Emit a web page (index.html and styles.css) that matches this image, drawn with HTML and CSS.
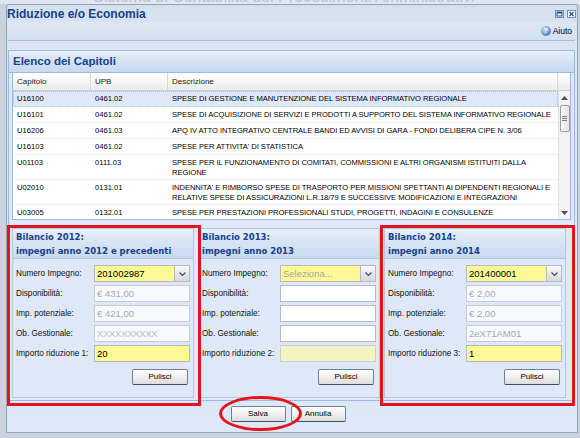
FILE: index.html
```html
<!DOCTYPE html>
<html lang="it">
<head>
<meta charset="utf-8">
<title>Riduzione e/o Economia</title>
<link rel="stylesheet" href="styles.css">
</head>
<body>
<div class="backdrop"><span>Sistema di Contabilità dei Procedimenti Amministrativi</span></div>
<div class="win">
  <div class="win-head">
    <span class="win-title">Riduzione e/o Economia</span>
    <span class="tools">
      <svg class="tool" width="9" height="8" viewBox="0 0 9 8"><rect x="0.5" y="0.5" width="8" height="7" fill="#fff" stroke="#6f8fbd"/><rect x="2" y="2" width="5" height="4" fill="none" stroke="#1f4a8a"/><rect x="2" y="2" width="5" height="1.5" fill="#1f4a8a"/></svg>
      <svg class="tool" width="9" height="8" viewBox="0 0 9 8"><rect x="0.5" y="0.5" width="8" height="7" fill="#fff" stroke="#6f8fbd"/><path d="M2.5 2 L6.5 6 M6.5 2 L2.5 6" stroke="#1f4a8a" stroke-width="1.2"/></svg>
    </span>
  </div>
  <div class="win-body">
    <div class="tbar">
      <span class="qicon">?</span><span class="aiuto">Aiuto</span>
    </div>
    <div class="panel">
      <div class="panel-head">Elenco dei Capitoli</div>
      <div class="panel-body">
        <div class="grid">
          <div class="grid-head">
            <div class="hc c1">Capitolo</div>
            <div class="hc c2">UPB</div>
            <div class="hc c3">Descrizione</div>
            <div class="hc c4"></div>
          </div>
          <div class="grid-body">
            <div class="rows">
              <div class="row sel"><div class="c1">U16100</div><div class="c2">0461.02</div><div class="c3">SPESE DI GESTIONE E MANUTENZIONE DEL SISTEMA INFORMATIVO REGIONALE</div></div>
              <div class="row"><div class="c1">U16101</div><div class="c2">0461.02</div><div class="c3">SPESE DI ACQUISIZIONE DI SERVIZI E PRODOTTI A SUPPORTO DEL SISTEMA INFORMATIVO REGIONALE</div></div>
              <div class="row"><div class="c1">U16206</div><div class="c2">0461.03</div><div class="c3">APQ IV ATTO INTEGRATIVO CENTRALE BANDI ED AVVISI DI GARA - FONDI DELIBERA CIPE N. 3/06</div></div>
              <div class="row"><div class="c1">U16103</div><div class="c2">0461.02</div><div class="c3">SPESE PER ATTIVITA' DI STATISTICA</div></div>
              <div class="row two"><div class="c1">U01103</div><div class="c2">0111.03</div><div class="c3">SPESE PER IL FUNZIONAMENTO DI COMITATI, COMMISSIONI E ALTRI ORGANISMI ISTITUITI DALLA<br>REGIONE</div></div>
              <div class="row two"><div class="c1">U02010</div><div class="c2">0131.01</div><div class="c3">INDENNITA' E RIMBORSO SPESE DI TRASPORTO PER MISSIONI SPETTANTI AI DIPENDENTI REGIONALI E<br>RELATIVE SPESE DI ASSICURAZIONI L.R.18/79 E SUCCESSIVE MODIFICAZIONI E INTEGRAZIONI</div></div>
              <div class="row"><div class="c1">U03005</div><div class="c2">0132.01</div><div class="c3">SPESE PER PRESTAZIONI PROFESSIONALI STUDI, PROGETTI, INDAGINI E CONSULENZE</div></div>
            </div>
            <div class="vscroll">
              <svg class="arr up" width="7" height="4" viewBox="0 0 7 4"><path d="M0 4 L3.5 0 L7 4 Z" fill="#4d4d4d"/></svg>
              <div class="thumb"><i></i><i></i><i></i></div>
              <svg class="arr down" width="7" height="4" viewBox="0 0 7 4"><path d="M0 0 L3.5 4 L7 0 Z" fill="#4d4d4d"/></svg>
            </div>
          </div>
        </div>

        <div class="sets">
          <div class="fset">
            <div class="fhead">Bilancio 2012:<br>impegni anno 2012 e precedenti</div>
            <div class="fbody">
              <div class="frow"><label>Numero Impegno:</label><div class="combo req"><span class="val">201002987</span><span class="trig"><svg width="7" height="4" viewBox="0 0 7 4"><path d="M0.5 0.5 L3.5 3.5 L6.5 0.5" fill="none" stroke="#41577a" stroke-width="1.3"/></svg></span></div></div>
              <div class="frow"><label>Disponibilità:</label><div class="inp dis">€ 431,00</div></div>
              <div class="frow"><label>Imp. potenziale:</label><div class="inp dis">€ 421,00</div></div>
              <div class="frow"><label>Ob. Gestionale:</label><div class="inp dis light">XXXXXXXXXX</div></div>
              <div class="frow"><label>Importo riduzione 1:</label><div class="inp req">20</div></div>
              <div class="fbtns"><span class="btn">Pulisci</span></div>
            </div>
          </div>
          <div class="fset">
            <div class="fhead">Bilancio 2013:<br>impegni anno 2013</div>
            <div class="fbody">
              <div class="frow"><label>Numero Impegno:</label><div class="combo req"><span class="val ph">Seleziona...</span><span class="trig"><svg width="7" height="4" viewBox="0 0 7 4"><path d="M0.5 0.5 L3.5 3.5 L6.5 0.5" fill="none" stroke="#41577a" stroke-width="1.3"/></svg></span></div></div>
              <div class="frow"><label>Disponibilità:</label><div class="inp"></div></div>
              <div class="frow"><label>Imp. potenziale:</label><div class="inp"></div></div>
              <div class="frow"><label>Ob. Gestionale:</label><div class="inp"></div></div>
              <div class="frow"><label>Importo riduzione 2:</label><div class="inp reqdis"></div></div>
              <div class="fbtns"><span class="btn">Pulisci</span></div>
            </div>
          </div>
          <div class="fset">
            <div class="fhead">Bilancio 2014:<br>impegni anno 2014</div>
            <div class="fbody">
              <div class="frow"><label>Numero Impegno:</label><div class="combo req"><span class="val">201400001</span><span class="trig"><svg width="7" height="4" viewBox="0 0 7 4"><path d="M0.5 0.5 L3.5 3.5 L6.5 0.5" fill="none" stroke="#41577a" stroke-width="1.3"/></svg></span></div></div>
              <div class="frow"><label>Disponibilità:</label><div class="inp dis">€ 2,00</div></div>
              <div class="frow"><label>Imp. potenziale:</label><div class="inp dis">€ 2,00</div></div>
              <div class="frow"><label>Ob. Gestionale:</label><div class="inp dis">2eX71AM01</div></div>
              <div class="frow"><label>Importo riduzione 3:</label><div class="inp req">1</div></div>
              <div class="fbtns"><span class="btn">Pulisci</span></div>
            </div>
          </div>
        </div>
      </div>
    </div>
    <div class="btnbar">
      <span class="btn big">Salva</span>
      <span class="btn big">Annulla</span>
    </div>
  </div>
</div>
<div class="mark box1"></div>
<div class="mark box2"></div>
<div class="mark oval"></div>
</body>
</html>
```
FILE: styles.css
```css
* { box-sizing: border-box; }
html, body { margin: 0; padding: 0; }
body {
  width: 580px;
  height: 438px;
  overflow: hidden;
  position: relative;
  background: #c9d2dd;
  font-family: "Liberation Sans", Arial, sans-serif;
  color: #000;
}
.backdrop {
  height: 4px;
  overflow: hidden;
  background: #e2e7ed;
}
.backdrop span {
  display: block;
  margin: -11px 0 0 93px;
  font-size: 16px;
  line-height: 16px;
  color: #bcc4cf;
  white-space: nowrap;
}
.win {
  margin-left: 6px;
  width: 572px;
  height: 429px;
  border: 1px solid #8fa5c2;
  border-radius: 3px 3px 0 0;
  background: linear-gradient(#d5e0ee, #dbe5f2 40px, #dfe8f6);
  display: flex;
  flex-direction: column;
}
.win-head {
  height: 17px;
  display: flex;
  align-items: center;
  justify-content: space-between;
  padding-right: 1px;
}
.win-title {
  font-weight: bold;
  font-size: 12px;
  color: #15428b;
  white-space: nowrap;
}
.tools { display: flex; gap: 3px; align-items: center; padding-top: 1px; }
.tool { display: block; }
.win-body {
  flex: 1;
  display: flex;
  flex-direction: column;
  padding: 0 1px 0 1px;
}
.tbar {
  height: 19px;
  border-bottom: 1px solid #a9bfd8;
  background: linear-gradient(#dde7f4, #d3e0f1);
  display: flex;
  justify-content: flex-end;
  align-items: center;
  padding-right: 3px;
  margin-right: 1px;
}
.qicon {
  width: 10px;
  height: 10px;
  border-radius: 50%;
  background: radial-gradient(circle at 35% 30%, #c9dcf3, #6f97cf 55%, #3d69ab);
  color: #fff;
  font-size: 8px;
  font-weight: bold;
  line-height: 10px;
  text-align: center;
  margin-right: 2px;
}
.aiuto { font-size: 8.5px; color: #000; }
.panel {
  margin: 9px 1px 0 0;
  border: 1px solid #99bbe8;
  background: #dfe8f6;
}
.panel-head {
  height: 22px;
  border-bottom: 1px solid #99bbe8;
  background: linear-gradient(#e9f0fa, #d6e3f4 45%, #c7d9f0);
  padding-left: 4px;
  font-weight: bold;
  font-size: 11.5px;
  line-height: 21px;
  color: #15428b;
}
.panel-body { padding: 0 3px 2px 3px; }
.grid {
  border: 1px solid #99bbe8;
  border-top: none;
  background: #fff;
  font-size: 7.6px;
}
.grid-head {
  display: flex;
  height: 18px;
  background: linear-gradient(#ffffff, #f4f4f4 60%, #ebebeb);
  border-bottom: 1px solid #d0d0d0;
  font-size: 8px;
}
.hc {
  line-height: 17px;
  padding-left: 4px;
  border-right: 1px solid #d6d6d6;
  color: #222;
}
.c1 { width: 78px; flex: none; }
.c2 { width: 77px; flex: none; }
.c3 { width: 390px; flex: none; }
.c4 { width: 12px; flex: none; border-right: none; }
.grid-body {
  display: flex;
  height: 128px;
  overflow: hidden;
}
.rows { width: 545px; flex: none; }
.row {
  display: flex;
  border-bottom: 1px solid #ededed;
  height: 16px;
}
.row > div {
  padding: 3px 0 0 4px;
  line-height: 10px;
  white-space: nowrap;
  overflow: hidden;
}
.row .c3 { letter-spacing: -0.06px; }
.row.two { height: 25px; }
.row.two > div { line-height: 9.5px; }
.row.sel {
  background: #dfe8f6;
  outline: 1px dotted #a3bae9;
  outline-offset: -1px;
}
.vscroll {
  flex: 1;
  background: #f3f3f3;
  border-left: 1px solid #e2e2e2;
  position: relative;
  display: flex;
  flex-direction: column;
  align-items: center;
}
.arr { display: block; }
.arr.up { margin-top: 5px; }
.arr.down { margin-top: auto; margin-bottom: 4px; }
.thumb {
  margin-top: 5px;
  width: 10px;
  height: 27px;
  border: 1px solid #9c9c9c;
  border-radius: 2px;
  background: linear-gradient(90deg, #f7f7f7, #e3e3e3);
  display: flex;
  flex-direction: column;
  align-items: center;
  justify-content: center;
  gap: 1px;
}
.thumb i {
  display: block;
  width: 5px;
  height: 1px;
  background: #7c7c7c;
}
.sets {
  display: flex;
  gap: 4px;
  padding-top: 8px;
}
.fset {
  width: 182px;
  height: 170px;
  border: 1px solid #b3c7e4;
  background: #dfe8f6;
}
.fhead {
  height: 30px;
  padding: 1px 0 0 3px;
  border-bottom: 1px solid #b3c7e4;
  background: linear-gradient(#e8eff9, #d6e3f4 50%, #c9daf0);
  font-family: "DejaVu Sans", Verdana, sans-serif;
  font-weight: bold;
  font-size: 8.5px;
  line-height: 14px;
  color: #15428b;
  white-space: nowrap;
}
.fbody { padding: 6px 0 0 3px; }
.frow {
  display: flex;
  align-items: center;
  height: 17px;
  margin-bottom: 3px;
}
.frow label {
  width: 78px;
  flex: none;
  font-size: 8.2px;
  color: #111;
  white-space: nowrap;
}
.inp, .combo {
  width: 96px;
  height: 17px;
  border: 1px solid #b5b8c8;
  background: #fff;
  font-size: 9.5px;
  line-height: 15px;
  padding-left: 2px;
  white-space: nowrap;
  overflow: hidden;
}
.inp.dis { background: #f7f9fc; border-color: #c6cdd8; color: #a4a9b2; }
.inp.dis.light { color: #bcc1c9; letter-spacing: -0.3px; }
.inp.req { background: #fdf994; border-color: #b5b8c8; }
.inp.reqdis { background: #f6f3c2; border-color: #c6cdd8; }
.combo {
  display: flex;
  padding-left: 0;
}
.combo.req { background: #fdf994; }
.combo .val { flex: 1; padding-left: 2px; }
.combo .val.ph { color: #a6a6a6; }
.trig {
  width: 15px;
  flex: none;
  border-left: 1px solid #b5b8c8;
  background: linear-gradient(#fbfbfb, #e6e6e6 55%, #d9d9d9);
  display: flex;
  align-items: center;
  justify-content: center;
}
.trig svg { display: block; }
.fbtns {
  display: flex;
  justify-content: flex-end;
  padding-right: 5px;
  margin-top: 7px;
}
.btn {
  display: block;
  width: 56px;
  height: 16px;
  border: 1px solid #6c7f9f;
  border-bottom-color: #3e5070;
  border-radius: 2px;
  background: linear-gradient(#ffffff, #f1f1f1 45%, #dcdcdc);
  font-size: 8px;
  line-height: 14px;
  text-align: center;
  color: #000;
}
.btnbar {
  flex: 1;
  display: flex;
  justify-content: center;
  gap: 5px;
  padding: 5px 8px 0 0;
}
.btn.big { width: 55px; }
.mark {
  position: absolute;
  border: 3px solid #e4141c;
}
.box1 { left: 7px; top: 225px; width: 194px; height: 181px; }
.box2 { left: 380px; top: 225px; width: 195px; height: 181px; }
.oval { left: 219px; top: 396px; width: 83px; height: 35px; border-radius: 50%; }
```
